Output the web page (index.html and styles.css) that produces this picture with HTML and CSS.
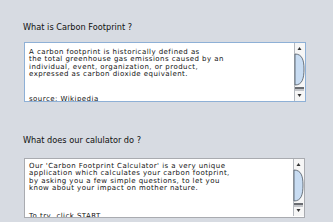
FILE: index.html
```html
<!DOCTYPE html>
<html lang="en">
<head>
  <meta charset="UTF-8">
  <title>Carbon Footprint</title>
  <link rel="stylesheet" href="styles.css">
</head>
<body>
  <div class="panel">
    <h2 class="title first">What is Carbon Footprint ?</h2>
    <div class="textbox focused">
      <div class="text">
        <div>A carbon footprint is historically defined as</div>
        <div>the total greenhouse gas emissions caused by an</div>
        <div>individual, event, organization, or product,</div>
        <div>expressed as carbon dioxide equivalent.</div>
        <div class="blank"></div>
        <div>source: Wikipedia</div>
      </div>
      <svg class="scrollbar" width="11" height="58" viewBox="0 0 11 58">
        <rect x="0" y="0" width="11" height="58" fill="#f6f6f6"/>
        <line x1="0.5" y1="0" x2="0.5" y2="58" stroke="#b4b8be"/>
        <path d="M3.5 7 L5.5 4 L7.5 7 Z" fill="#333"/>
        <path d="M1 11 C 8 11, 10 17, 10 26 C 10 36, 8 42, 1 42 Z" fill="#c8dcf2" stroke="#4d5560" stroke-width="0.8"/>
        <rect x="1" y="44" width="9" height="2" fill="#6a6d72"/>
        <rect x="1" y="46" width="9" height="2" fill="#c4c6ca"/>
        <path d="M3.5 51 L5.5 54 L7.5 51 Z" fill="#333"/>
      </svg>
    </div>

    <h2 class="title second">What does our calulator do ?</h2>
    <div class="textbox">
      <div class="text">
        <div>Our 'Carbon Footprint Calculator' is a very unique</div>
        <div>application which calculates your carbon footprint,</div>
        <div>by asking you a few simple questions, to let you</div>
        <div>know about your impact on mother nature.</div>
        <div class="blank wide"></div>
        <div>To try, click START</div>
      </div>
      <svg class="scrollbar" width="11" height="57" viewBox="0 0 11 57">
        <rect x="0" y="0" width="11" height="57" fill="#f6f6f6"/>
        <line x1="0.5" y1="0" x2="0.5" y2="57" stroke="#b4b8be"/>
        <path d="M3.5 7 L5.5 4 L7.5 7 Z" fill="#333"/>
        <path d="M1 11 C 8 11, 10 17, 10 26 C 10 36, 8 42, 1 42 Z" fill="#c8dcf2" stroke="#4d5560" stroke-width="0.8"/>
        <rect x="1" y="44" width="9" height="2" fill="#6a6d72"/>
        <rect x="1" y="46" width="9" height="2" fill="#c4c6ca"/>
        <path d="M3.5 50 L5.5 53 L7.5 50 Z" fill="#333"/>
      </svg>
    </div>
  </div>
</body>
</html>
```

FILE: styles.css
```css
body {
  margin: 0;
  background-color: #d7dbe2;
  font-family: "DejaVu Sans", sans-serif;
  color: #111;
}

.panel {
  padding: 22px 28px 0 24px;
}

.title {
  margin: 0 0 0 -1px;
  font-size: 8.2px;
  line-height: 10px;
  font-weight: normal;
}

.title.first {
  margin-bottom: 10px;
}

.title.second {
  margin-top: 33px;
  margin-bottom: 13px;
}

.textbox {
  display: flex;
  height: 58px;
  width: 279px;
  background-color: #fff;
  border: 1px solid #a9abb0;
  overflow: hidden;
}

.textbox.focused {
  border-color: #8eb0d6;
  width: 280px;
}

.text {
  flex: 1;
  padding: 4px 0 0 4px;
  font-size: 7px;
  line-height: 7.4px;
  letter-spacing: 0.45px;
  white-space: nowrap;
  overflow: hidden;
}

.focused .text {
  padding-top: 6px;
}

.blank {
  height: 17.5px;
}

.blank.wide {
  height: 20.5px;
}

.scrollbar {
  flex: none;
  display: block;
}
```
